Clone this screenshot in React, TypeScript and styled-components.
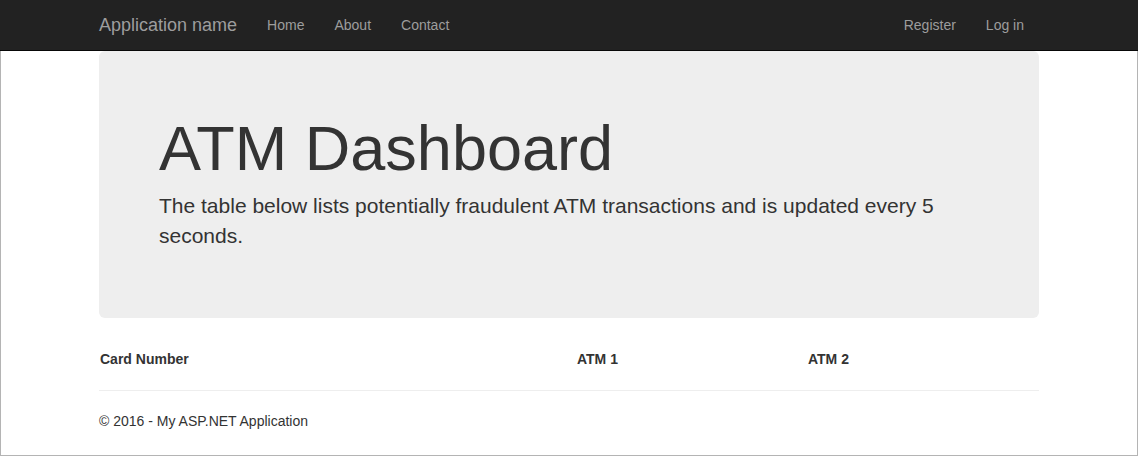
import React from 'react';
import styled, { createGlobalStyle } from 'styled-components';

const GlobalStyle = createGlobalStyle`
  * {
    box-sizing: border-box;
  }
  html, body {
    margin: 0;
    padding: 0;
  }
  body {
    font-family: "Liberation Sans", Arial, Helvetica, sans-serif;
    font-size: 14px;
    line-height: 1.42857143;
    color: #333;
    background: #fff;
  }
`;

const navLinks = ['Home', 'About', 'Contact'];
const authLinks = ['Register', 'Log in'];
const columns = ['Card Number', 'ATM 1', 'ATM 2'];

export default function App() {
  return (
    <>
      <GlobalStyle />
      <Page>
        <Navbar>
          <NavContainer>
            <Brand href="#">Application name</Brand>
            <NavList>
              {navLinks.map((l) => (
                <NavItem key={l} href="#">
                  {l}
                </NavItem>
              ))}
            </NavList>
            <NavList $right>
              {authLinks.map((l) => (
                <NavItem key={l} href="#">
                  {l}
                </NavItem>
              ))}
            </NavList>
          </NavContainer>
        </Navbar>
        <Frame>
          <Container>
            <Jumbotron>
              <h1>ATM Dashboard</h1>
              <p>
                The table below lists potentially fraudulent ATM transactions and is
                updated every 5 seconds.
              </p>
            </Jumbotron>
            <TableHead>
              {columns.map((c) => (
                <HeadCell key={c}>{c}</HeadCell>
              ))}
            </TableHead>
            <Rule />
            <Footer>
              <p>&copy; 2016 - My ASP.NET Application</p>
            </Footer>
          </Container>
        </Frame>
      </Page>
    </>
  );
}

const Page = styled.div`
  display: flex;
  flex-direction: column;
  height: 100vh;
`;

const Navbar = styled.nav`
  height: 51px;
  background-color: #222;
  border-bottom: 1px solid #080808;
  flex-shrink: 0;
`;

const NavContainer = styled.div`
  width: 970px;
  margin: 0 auto;
  padding: 0 15px;
  display: flex;
  align-items: center;
  height: 50px;
`;

const Brand = styled.a`
  font-size: 18px;
  line-height: 20px;
  color: #9d9d9d;
  text-decoration: none;
  padding: 15px 15px 15px 0;
`;

const NavList = styled.div<{ $right?: boolean }>`
  display: flex;
  margin-left: ${(p) => (p.$right ? 'auto' : '0')};
`;

const NavItem = styled.a`
  color: #9d9d9d;
  text-decoration: none;
  padding: 15px;
  line-height: 20px;
  font-size: 14px;
`;

const Frame = styled.div`
  flex: 1;
  border: 1px solid #b4b4b4;
  border-top: none;
`;

const Container = styled.div`
  width: 970px;
  margin: 0 auto;
  padding: 0 15px;
`;

const Jumbotron = styled.div`
  background-color: #eee;
  border-radius: 6px;
  padding: 63px 60px 52px;
  margin-bottom: 30px;

  h1 {
    margin: 0 0 8px;
    font-size: 63px;
    font-weight: 500;
    line-height: 1.1;
    color: inherit;
  }
  p {
    margin: 0 0 15px;
    font-size: 21px;
    font-weight: 200;
    line-height: 30px;
  }
`;

const TableHead = styled.div`
  display: grid;
  grid-template-columns: 477px 231px 1fr;
  padding: 1px 0 1px 1px;
`;

const HeadCell = styled.div`
  font-weight: bold;
  line-height: 20px;
`;

const Rule = styled.hr`
  margin: 20px 0;
  border: 0;
  border-top: 1px solid #eee;
`;

const Footer = styled.footer`
  p {
    margin: 0;
    line-height: 20px;
  }
`;
